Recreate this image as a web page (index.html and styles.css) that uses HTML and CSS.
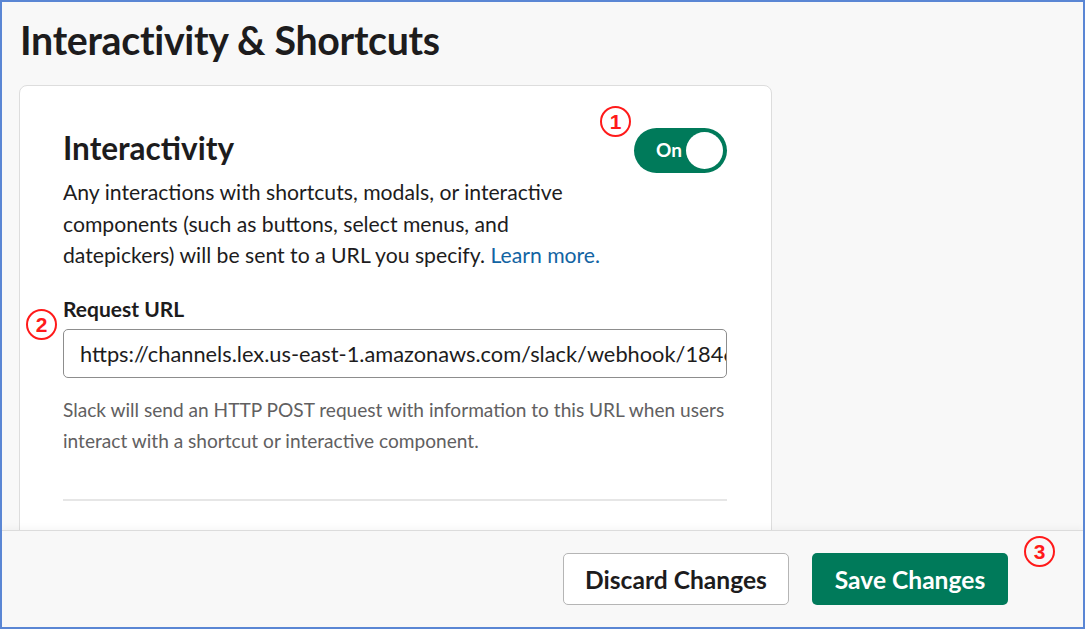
FILE: index.html
```html
<!DOCTYPE html>
<html lang="en">
<head>
<meta charset="utf-8">
<title>Interactivity &amp; Shortcuts</title>
<link rel="stylesheet" href="styles.css">
</head>
<body>
<div class="frame">
  <main class="main">
    <h1 class="page-title">Interactivity &amp; Shortcuts</h1>
    <section class="card">
      <div class="card-head">
        <div class="card-intro">
          <h2 class="card-title">Interactivity</h2>
          <p class="card-desc">Any interactions with shortcuts, modals, or interactive components (such as buttons, select menus, and datepickers) will be sent to a URL you specify. <a class="link" href="#">Learn more.</a></p>
        </div>
        <div class="toggle-wrap">
          <span class="marker marker-1">1</span>
          <div class="toggle">
            <span class="toggle-label">On</span>
            <span class="toggle-knob"></span>
          </div>
        </div>
      </div>
      <div class="field">
        <span class="marker marker-2">2</span>
        <label class="field-label">Request URL</label>
        <div class="input">https://channels.lex.us-east-1.amazonaws.com/slack/webhook/1846</div>
        <p class="help">Slack will send an HTTP POST request with information to this URL when users interact with a shortcut or interactive component.</p>
      </div>
      <div class="divider"></div>
    </section>
  </main>
  <footer class="footer">
    <button class="btn btn-secondary">Discard Changes</button>
    <div class="save-wrap">
      <button class="btn btn-primary">Save Changes</button>
      <span class="marker marker-3">3</span>
    </div>
  </footer>
</div>
</body>
</html>
```

FILE: styles.css
```css
* { box-sizing: border-box; }
html, body { margin: 0; padding: 0; }
body {
  font-family: Lato, "Noto Sans", sans-serif;
  color: #1d1c1d;
  background: #fff;
}
.frame {
  width: 1085px;
  height: 629px;
  border: 2px solid #5a86d4;
  background: #f8f8f8;
  display: flex;
  flex-direction: column;
  overflow: hidden;
}
.main {
  flex: 1;
  min-height: 0;
  overflow: hidden;
  padding: 0 0 0 17px;
}
.page-title {
  margin: 10px 0 0 1px;
  font-size: 39.3px;
  font-weight: 700;
  line-height: 56px;
  letter-spacing: -0.3px;
}
.card {
  margin-top: 17px;
  width: 753px;
  background: #fff;
  border: 1px solid #dddddd;
  border-radius: 8px;
  padding: 42px 44px 60px 43px;
}
.card-head {
  display: flex;
  justify-content: space-between;
  align-items: flex-start;
}
.card-intro { width: 553px; }
.card-title {
  margin: 3px 0 0 0;
  font-size: 31.5px;
  font-weight: 700;
  line-height: 34px;
}
.card-desc {
  margin: 12px 0 0 0;
  font-size: 21.2px;
  line-height: 31.5px;
}
.link { color: #1264a3; text-decoration: none; }
.toggle-wrap { position: relative; }
.toggle {
  width: 93px;
  height: 45px;
  border-radius: 23px;
  background: #007a5a;
  display: flex;
  align-items: center;
  justify-content: space-between;
  padding: 0 4px 0 22px;
}
.toggle-label {
  color: #fff;
  font-weight: 700;
  font-size: 19px;
  margin-top: -2px;
}
.toggle-knob {
  width: 37px;
  height: 37px;
  border-radius: 50%;
  background: #fff;
}
.marker {
  position: absolute;
  width: 31px;
  height: 31px;
  border: 2px solid #ff1a1a;
  border-radius: 50%;
  color: #ff1a1a;
  font-family: "Liberation Sans", Arial, sans-serif;
  font-weight: 700;
  font-size: 21px;
  line-height: 27px;
  text-align: center;
}
.marker-1 { left: -34px; top: -22px; }
.marker-2 { left: -37px; top: 12px; }
.marker-3 { left: 212px; top: -17px; }
.field {
  position: relative;
  margin-top: 25px;
}
.field-label {
  display: block;
  font-size: 21px;
  font-weight: 700;
  line-height: 23px;
}
.input {
  margin-top: 9px;
  height: 49px;
  border: 1px solid #8d8d8d;
  border-radius: 5px;
  padding: 0 0 0 16px;
  font-size: 21.8px;
  line-height: 47px;
  white-space: nowrap;
  overflow: hidden;
}
.help {
  margin: 16px 0 0 0;
  font-size: 19.1px;
  line-height: 31px;
  color: #616061;
}
.divider {
  margin-top: 43px;
  height: 2px;
  background: #e6e6e6;
}
.footer {
  flex: none;
  height: 97px;
  border-top: 1px solid #dcdcdc;
  box-shadow: 0 -3px 6px rgba(0, 0, 0, 0.03);
  background: #f8f8f8;
  display: flex;
  align-items: center;
  justify-content: flex-end;
  gap: 23px;
  padding: 0 75px 0 0;
  position: relative;
}
.save-wrap { position: relative; }
.btn {
  height: 52px;
  border-radius: 5px;
  font-family: Lato, "Noto Sans", sans-serif;
  font-weight: 700;
  font-size: 24.6px;
  cursor: pointer;
}
.btn-secondary {
  width: 226px;
  background: #fff;
  color: #1d1c1d;
  border: 1px solid #b5b5b5;
}
.btn-primary {
  width: 196px;
  background: #007a5a;
  color: #fff;
  border: none;
}
```
